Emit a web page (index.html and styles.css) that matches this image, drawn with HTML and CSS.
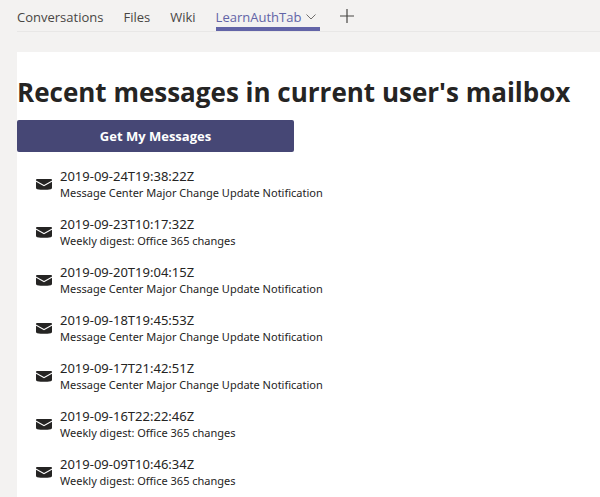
FILE: index.html
```html
<!DOCTYPE html>
<html lang="en">
<head>
<meta charset="utf-8">
<meta name="viewport" content="width=device-width, initial-scale=1">
<title>LearnAuthTab</title>
<link rel="stylesheet" href="styles.css">
</head>
<body>
<svg width="0" height="0" class="sprite" aria-hidden="true">
  <symbol id="mail" viewBox="0 0 16 11">
    <path fill="#252423" d="M1 0H15Q16 0 16 1V1.500L8 6 0 1.500V1Q0 0 1 0Z"/>
    <path fill="#252423" d="M0 2.800 8 7.300 16 2.800V8.800Q16 10 14.800 10.200Q8 11.200 1.200 10.200Q0 10 0 8.800Z"/>
  </symbol>
</svg>
<nav class="tabs" aria-label="Channel tabs">
  <a class="tab" href="#">Conversations</a>
  <a class="tab" href="#">Files</a>
  <a class="tab" href="#">Wiki</a>
  <a class="tab active" href="#" aria-current="page">LearnAuthTab
    <svg width="10" height="6" viewBox="0 0 10 6" aria-hidden="true"><path d="M.5.5 5 5 9.500.5" fill="none" stroke="#6f6e6c"/></svg>
  </a>
  <button class="add" type="button" aria-label="Add a tab">
    <svg width="14" height="14" viewBox="0 0 14 14" aria-hidden="true"><path d="M7 0V14M0 7H14" fill="none" stroke="#484644" stroke-width="1.200"/></svg>
  </button>
</nav>
<main class="content">
  <h1>Recent messages in current user's mailbox</h1>
  <button class="primary" type="button">Get My Messages</button>
  <ul class="messages">
    <li><svg class="mail" aria-hidden="true"><use href="#mail"/></svg><div><div class="date">2019-09-24T19:38:22Z</div><div class="subject">Message Center Major Change Update Notification</div></div></li>
    <li><svg class="mail" aria-hidden="true"><use href="#mail"/></svg><div><div class="date">2019-09-23T10:17:32Z</div><div class="subject">Weekly digest: Office 365 changes</div></div></li>
    <li><svg class="mail" aria-hidden="true"><use href="#mail"/></svg><div><div class="date">2019-09-20T19:04:15Z</div><div class="subject">Message Center Major Change Update Notification</div></div></li>
    <li><svg class="mail" aria-hidden="true"><use href="#mail"/></svg><div><div class="date">2019-09-18T19:45:53Z</div><div class="subject">Message Center Major Change Update Notification</div></div></li>
    <li><svg class="mail" aria-hidden="true"><use href="#mail"/></svg><div><div class="date">2019-09-17T21:42:51Z</div><div class="subject">Message Center Major Change Update Notification</div></div></li>
    <li><svg class="mail" aria-hidden="true"><use href="#mail"/></svg><div><div class="date">2019-09-16T22:22:46Z</div><div class="subject">Weekly digest: Office 365 changes</div></div></li>
    <li><svg class="mail" aria-hidden="true"><use href="#mail"/></svg><div><div class="date">2019-09-09T10:46:34Z</div><div class="subject">Weekly digest: Office 365 changes</div></div></li>
  </ul>
</main>
</body>
</html>
```

FILE: styles.css
```css
* { box-sizing: border-box; }
body {
  display: flex;
  flex-direction: column;
  min-height: 100vh;
  margin: 0;
  padding-left: 17px;
  background: #f3f2f1;
  color: #252423;
  font-family: "Segoe UI", "Open Sans", sans-serif;
}
.sprite { position: absolute; }
.tabs {
  display: flex;
  align-items: flex-start;
  gap: 20px;
  height: 32px;
  margin-bottom: 20px;
  border-bottom: 1px solid #e8e7e6;
}
.tab {
  display: flex;
  align-items: center;
  gap: 5px;
  height: 31px;
  padding-top: 6px;
  border-bottom: 4px solid transparent;
  color: #484644;
  font-size: 13px;
  text-decoration: none;
}
.active {
  padding-right: 4px;
  border-color: #6264a7;
  color: #6264a7;
}
.add {
  display: flex;
  align-items: center;
  height: 31px;
  padding: 0;
  border: 0;
  background: none;
}
.content {
  flex: 1;
  background: #fff;
}
h1 {
  margin: 0;
  padding-top: 20px;
  font-size: 26px;
  line-height: 40px;
}
.primary {
  display: block;
  width: 277px;
  max-width: 100%;
  height: 32px;
  margin-top: 8px;
  padding: 0;
  border: 0;
  border-radius: 2px;
  background: #464775;
  color: #fff;
  font: bold 13px "Segoe UI", "Open Sans", sans-serif;
}
.messages {
  margin: 0;
  padding: 8px 0 0 19px;
  font-family: "Segoe UI", "Noto Sans", sans-serif;
  list-style: none;
}
.messages li {
  display: flex;
  align-items: center;
  gap: 8px;
  height: 48px;
}
.mail {
  width: 16px;
  height: 11px;
}
.date {
  font-size: 13px;
  line-height: 18px;
}
.subject {
  font-size: 11px;
  line-height: 16px;
}
```
